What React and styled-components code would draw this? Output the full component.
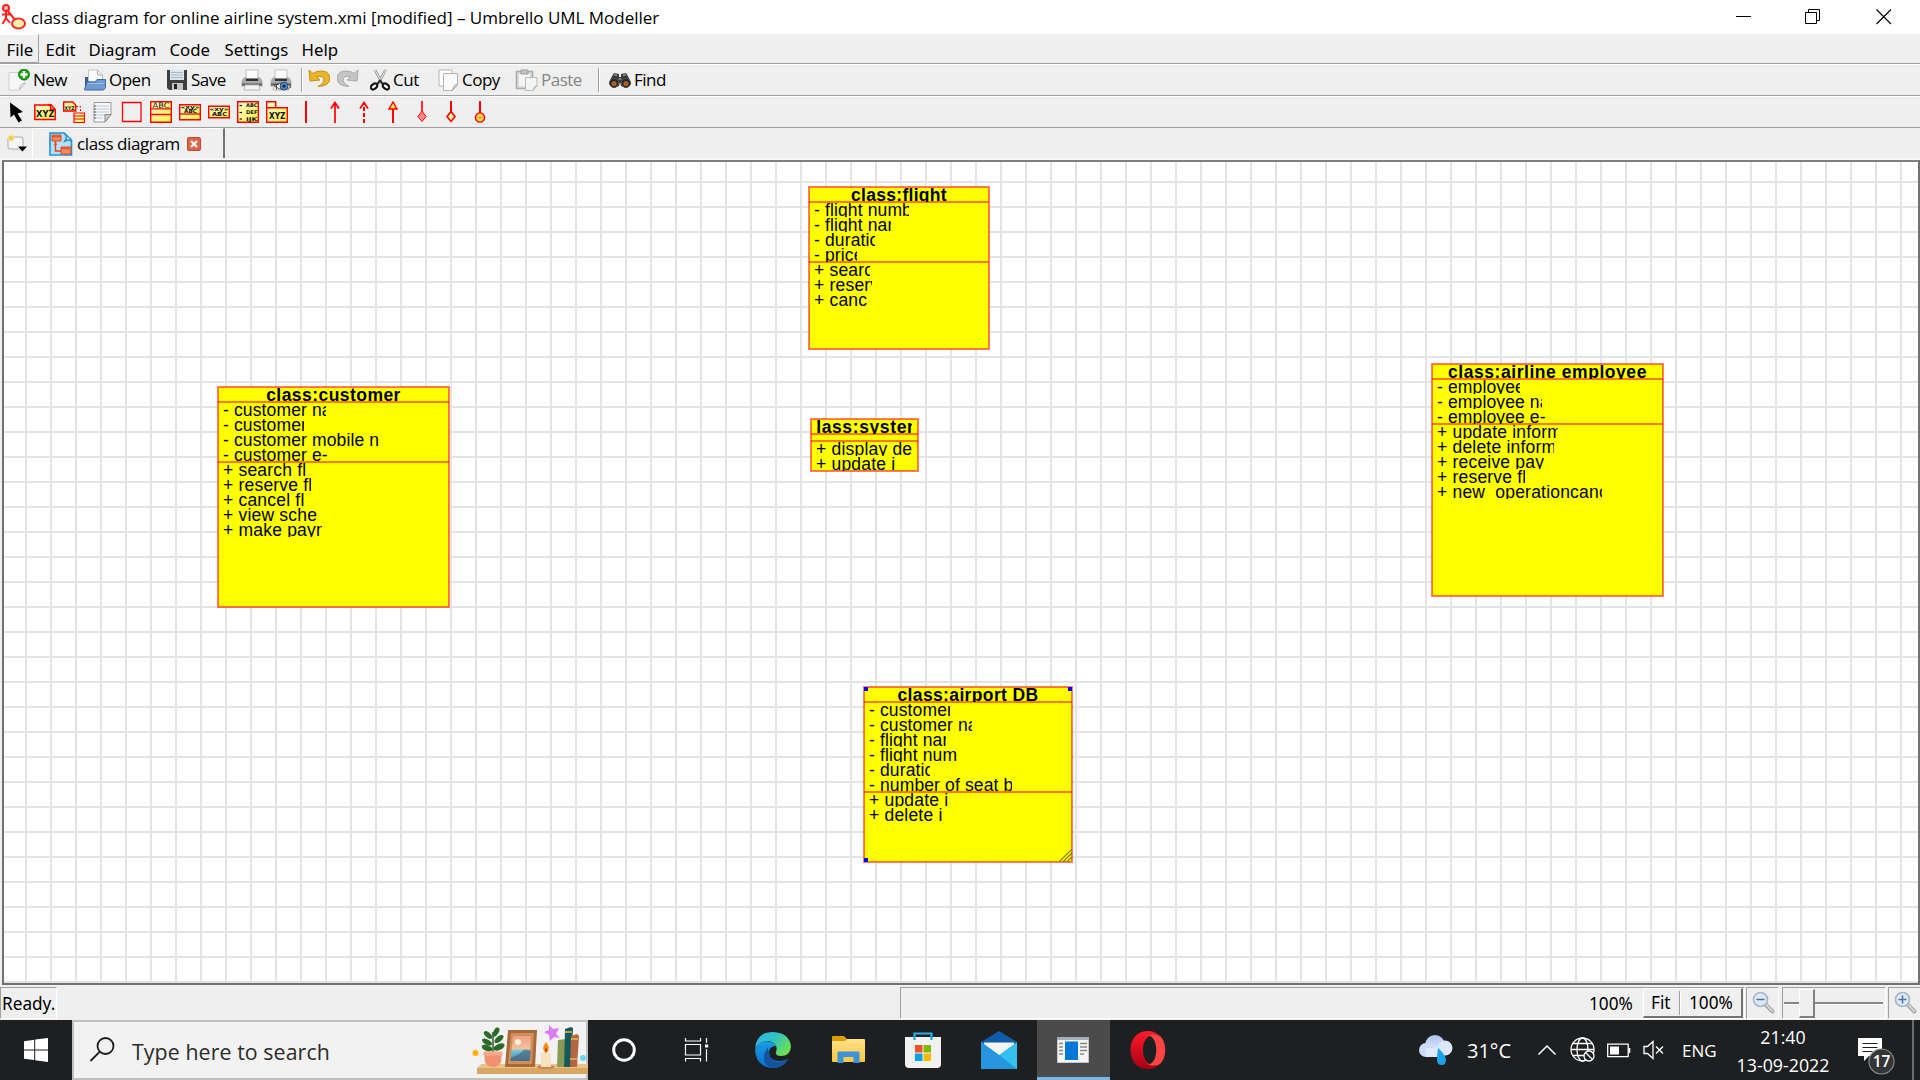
import React from "react";
import styled, { createGlobalStyle } from "styled-components";

const GlobalStyle = createGlobalStyle`
  *, *::before, *::after { box-sizing: border-box; }
  body { margin: 0; overflow: hidden; background: #efefef; }
  svg { display: block; flex: none; }
`;

const RED = "#ff0000";

const Screen = styled.div`
  width: 1920px;
  height: 1080px;
  display: flex;
  flex-direction: column;
  overflow: hidden;
  background: #efefef;
  color: #000;
  font-family: "Noto Sans", "Open Sans", sans-serif;
  font-size: 16.8px;
  white-space: nowrap;
`;

const TitleBar = styled.header`
  height: 34px;
  flex: none;
  display: flex;
  align-items: center;
  background: #fff;
  padding: 0 9px 0 1px;
`;

const WindowTitle = styled.div`
  flex: 1;
  margin-left: 5px;
  padding-top: 2px;
  font: 17px/24px "Open Sans", sans-serif;
  letter-spacing: ${(p) => p.$tracking}px;
`;

const WindowButtons = styled.div`
  display: flex;
  gap: 46px;
  padding-right: 15px;
`;

const MenuBar = styled.nav`
  height: 30px;
  flex: none;
  display: flex;
  border-bottom: 1px solid #a0a0a0;
`;

const MenuItem = styled.div`
  width: ${(p) => p.$width}px;
  height: 29px;
  padding: 0 0 0 6.5px;
  line-height: 29px;
  border-right: 1px solid ${(p) => (p.$active ? "#a0a0a0" : "transparent")};
  border-bottom: 1px solid ${(p) => (p.$active ? "#a0a0a0" : "transparent")};
  border-top: 1px solid ${(p) => (p.$active ? "#fff" : "transparent")};
`;

const ToolBar = styled.div`
  height: 32px;
  flex: none;
  display: flex;
  align-items: center;
  border-top: 1px solid #fff;
  border-bottom: 1px solid #a0a0a0;
  padding-left: ${(p) => p.$inset}px;
  gap: ${(p) => p.$gap || 0}px;
`;

const ToolButton = styled.div`
  width: ${(p) => p.$width}px;
  display: flex;
  align-items: center;
  gap: 3px;
  flex: none;
  color: ${(p) => (p.$disabled ? "#868686" : "#000")};
  font: 17px/24px "Open Sans", sans-serif;
  letter-spacing: -0.5px;
`;

const ZoomButton = styled.div`
  width: ${(p) => p.$width}px;
  flex: none;
`;

const Separator = styled.div`
  width: 2px;
  height: 24px;
  background: #a0a0a0;
  border-right: 1px solid #fff;
  margin-right: ${(p) => p.$after}px;
  flex: none;
`;

const TabBar = styled.div`
  height: 32px;
  flex: none;
  display: flex;
  align-items: stretch;
  border-bottom: 2px solid #f8f8f8;
`;

const NewTab = styled.div`
  width: 32px;
  padding: 6px 0 0 6px;
`;

const Tab = styled.div`
  width: 193px;
  display: flex;
  align-items: center;
  padding-left: 16px;
  border-left: 1px solid #fff;
  border-top: 1px solid #fff;
  border-right: 2px solid #727272;
`;

const TabName = styled.span`
  width: 114px;
  flex: none;
  padding-left: 4px;
  font: 17px/24px "Open Sans", sans-serif;
  letter-spacing: -0.4px;
`;

const Canvas = styled.main`
  position: relative;
  height: 825px;
  flex: none;
  margin-left: 2px;
  overflow: hidden;
  border: 2px solid #727272;
  border-top-color: #808080;
  background-color: #fff;
  background-image:
    linear-gradient(to right, #e4e4e4 2px, transparent 2px),
    linear-gradient(to bottom, #e4e4e4 2px, transparent 2px);
  background-size: 25px 25px;
  background-position: 21px 19px;
`;

const LINE = "rgba(255, 0, 0, 0.52)";

const ClassBox = styled.section`
  position: absolute;
  left: ${(p) => p.$x}px;
  top: ${(p) => p.$y}px;
  width: ${(p) => p.$w}px;
  height: ${(p) => p.$h}px;
  background: #ffff00;
  box-shadow: 0 0 0 1px ${LINE}, inset 0 0 0 1px ${LINE};
  font-family: "Liberation Sans", Arial, sans-serif;
  font-size: 17.5px;
`;

const ClassName = styled.div`
  height: 15px;
  padding: 0 6px;
  box-shadow: 0 1px 0 ${LINE}, inset 0 -1px 0 ${LINE};
`;

const ClassNameClip = styled.div`
  height: 15px;
  display: flex;
  justify-content: center;
  overflow: hidden;
  line-height: 16px;
  font-weight: 700;
  letter-spacing: ${(p) => p.$tracking}px;
`;

const Members = styled.div`
  padding-left: 5px;
  min-height: 7px;
  box-shadow: ${(p) => (p.$ruled ? `0 1px 0 ${LINE}, inset 0 -1px 0 ${LINE}` : "none")};
`;

const Member = styled.div`
  width: ${(p) => p.$w}px;
  height: 15px;
  overflow: hidden;
  line-height: 16px;
  letter-spacing: ${(p) => (p.$operation ? 0.2 : 0.13)}px;
  white-space: pre;
`;

const Handle = styled.i`
  position: absolute;
  width: 4px;
  height: 4px;
  background: #0000ff;
  ${(p) => p.$v}: 0;
  ${(p) => p.$h}: 0;
`;

const ResizeGrip = styled.svg`
  position: absolute;
  right: 0;
  bottom: 0;
`;

const StatusBar = styled.footer`
  height: 35px;
  flex: none;
  display: flex;
  align-items: flex-start;
  padding-top: 2px;
  font-size: 17.2px;
`;

const sunken = `
  border: 1px solid #a0a0a0;
  border-right-color: #fff;
  border-bottom-color: #fff;
`;

const StatusPanel = styled.div`
  ${sunken}
  width: ${(p) => p.$width}px;
  height: 32px;
  display: flex;
  align-items: center;
  justify-content: ${(p) => p.$align || "flex-start"};
  margin-right: ${(p) => p.$after || 0}px;
  padding-left: ${(p) => p.$pad || 0}px;
  flex: none;
`;

const ZoomValue = styled.span`
  width: 54px;
`;

const ZoomButtons = styled.div`
  width: 100px;
  height: 30px;
  display: flex;
  align-items: center;
  margin-right: 1px;
  border: 1px solid #fff;
  border-right: 2px solid #727272;
  border-bottom: 2px solid #727272;
  padding-left: 7px;
`;

const Slider = styled.div`
  width: 99px;
  height: 30px;
  display: flex;
  align-items: center;
`;

const Groove = styled.div`
  width: ${(p) => p.$width}px;
  height: 3px;
  background: #868686;
  border-bottom: 1px solid #fff;
`;

const Thumb = styled.div`
  width: 16px;
  height: 29px;
  background: #efefef;
  border: 1px solid #fff;
  border-right: 2px solid #808080;
  border-bottom: 2px solid #808080;
`;

const TaskBar = styled.div`
  height: 60px;
  flex: none;
  display: flex;
  background: #1d1f21;
  color: #fff;
  font-family: "Open Sans", sans-serif;
`;

const StartButton = styled.div`
  width: 72px;
  display: flex;
  align-items: center;
  padding-left: 24px;
`;

const SearchBox = styled.div`
  width: 516px;
  height: 60px;
  display: flex;
  align-items: center;
  flex: none;
  background: #f2f2f2;
  border: 2px solid #c0c0c0;
  padding-left: 15px;
  color: #2b2b2b;
  font-size: 21.3px;
`;

const SearchHint = styled.span`
  width: 357px;
  flex: none;
  padding: 3px 0 0 17px;
  letter-spacing: ${(p) => p.$tracking}px;
`;

const TaskButton = styled.div`
  width: ${(p) => p.$width || 75}px;
  height: 60px;
  display: flex;
  align-items: center;
  justify-content: center;
  flex: none;
  background: ${(p) => (p.$active ? "#4b4b4b" : "transparent")};
  border-bottom: 3px solid ${(p) => (p.$active ? "#76b9ed" : "transparent")};
  border-top: 3px solid transparent;
  padding-right: ${(p) => (p.$active ? 2 : 0)}px;
`;

const Tray = styled.div`
  margin-left: auto;
  width: 502px;
  display: flex;
  align-items: center;
`;

const TrayItem = styled.div`
  width: ${(p) => p.$width}px;
  flex: none;
  font-size: ${(p) => p.$size || 17}px;
`;

const Clock = styled.div`
  width: 98px;
  margin-right: 24px;
  padding-top: 1px;
  font-size: 17.8px;
  line-height: 28px;
  text-align: center;
`;

const NotificationSlot = styled.div`
  padding-top: 12px;
`;

const ShowDesktop = styled.div`
  width: 8px;
  height: 60px;
  border-left: 2px solid #6a6b6c;
  margin-left: auto;
`;

/* ---------- icons ---------- */

const AppLogo = () => (
  <svg width="25" height="26" viewBox="0 0 25 26" fill="none" stroke="#f22" strokeWidth="2">
    <circle cx="5" cy="4" r="3" fill="#fbb" />
    <path d="M5 7v7M1 10.500h9M5 14l-3.500 6M5 14l4 5M6 6l9 11" />
    <ellipse cx="17.500" cy="19.500" rx="6.500" ry="5" fill="#fdf3b0" />
  </svg>
);

const Minimize = () => (
  <svg width="24" height="24" viewBox="0 0 24 24"><path d="M4 11.500h15" stroke="#000" /></svg>
);
const Restore = () => (
  <svg width="24" height="24" viewBox="0 0 24 24" fill="none" stroke="#000">
    <path d="M3.500 7.500h11v11h-11zM6.500 7.500v-3h11v11h-3" />
  </svg>
);
const CloseWindow = () => (
  <svg width="24" height="24" viewBox="0 0 24 24"><path d="M4.500 4.500l14.500 14.500M19 4.500l-14.500 14.500" stroke="#000" strokeWidth="1.100" /></svg>
);

const Icon = ({ children, w = 22, h = 22 }) => (
  <svg width={w} height={h} viewBox={`0 0 ${w} ${h}`} fill="none">{children}</svg>
);

const NewIcon = () => (
  <Icon>
    <path d="M1 3.500h16v11l-6 6.500H1z" fill="#f7f7f7" stroke="#cfcfcf" />
    <path d="M17 14.500q-5-.500-5.500 6z" fill="#fff" stroke="#b5b5b5" />
    <circle cx="16" cy="5.500" r="5.500" fill="#22a01c" stroke="#14830f" />
    <path d="M16 2v7M12.500 5.500h7" stroke="#fff" strokeWidth="2.400" />
  </Icon>
);
const OpenIcon = () => (
  <Icon>
    <path d="M1 8h5v12H1z" fill="#315f99" />
    <path d="M4.500 12V1h9l5 5v8z" fill="#fafafa" stroke="#c4c4c4" />
    <path d="M13.500 1v5h5" stroke="#b0b0b0" />
    <path d="M.500 20.500L3 13h8l2-2.500h8.500v8l-2 2.500H.500z" fill="#6f9bd0" stroke="#3b6aa6" />
    <path d="M3.500 14.500h17" stroke="#9dbde3" />
  </Icon>
);
const SaveIcon = () => (
  <Icon>
    <path d="M1 1h20v20H3l-2-2z" fill="#3f3f42" />
    <path d="M4 1h14v10H4z" fill="#dce4ec" />
    <path d="M5 3.500h12M5 6h12M5 8.500h12" stroke="#a9b9c8" />
    <path d="M6 14h11v7H6z" fill="#c5c5c5" />
    <path d="M8 15h3v5H8z" fill="#222" />
  </Icon>
);
const PrinterBody = () => (
  <>
    <path d="M5 1h12v9H5z" fill="#fff" stroke="#c0c0c0" />
    <path d="M2 9.500l3-2v4h12v-4l3 2 1.500 3v5H.500v-5z" fill="#a9a9a9" />
    <path d="M5 9.500h12v2.500H5z" fill="#333" />
    <path d="M1 15.500h20" stroke="#5d5d5d" strokeWidth="2" />
    <path d="M4 16h14l1 5H3z" fill="#f4f4f4" stroke="#b5b5b5" />
  </>
);
const PrintIcon = () => <Icon><PrinterBody /></Icon>;
const PreviewIcon = () => (
  <Icon>
    <PrinterBody />
    <path d="M4 17q9-7 17 1q-8 5-15 0z" fill="#fff" stroke="#555" />
    <circle cx="14" cy="17" r="4" fill="#4b86bd" stroke="#27547f" />
    <circle cx="14" cy="17" r="1.500" fill="#10243a" />
    <path d="M4 15.500h5M6.500 15.500v5" stroke="#444" />
  </Icon>
);
const UndoIcon = ({ redo }) => (
  <Icon>
    <g transform={redo ? "translate(22 0) scale(-1 1)" : undefined}>
      <path
        d="M1 1l1 11 10-1-3.500-3.500q7.500-1 7.500 3.500 0 4-6 6.500 12-.500 12-8.500Q21 1.500 12.500 2 8 2 5 4.500z"
        fill={redo ? "#c4c4c4" : "#e9b52b"}
        stroke={redo ? "#a8a8a8" : "#c48f12"}
        strokeLinejoin="round"
      />
    </g>
  </Icon>
);
const CutIcon = () => (
  <Icon w={20}>
    <path d="M5 1l7.500 14M15.500 1L8 15" stroke="#8d8d8d" strokeWidth="2.600" />
    <path d="M5 1l7.500 14M15.500 1L8 15" stroke="#f2f2f2" strokeWidth="1" />
    <ellipse cx="4" cy="17.500" rx="3.600" ry="2.400" transform="rotate(-38 4 17.500)" stroke="#111" strokeWidth="2" />
    <ellipse cx="16" cy="17.500" rx="3.600" ry="2.400" transform="rotate(38 16 17.500)" stroke="#111" strokeWidth="2" />
    <path d="M7 15.500l3-4 3 4" stroke="#222" strokeWidth="1.800" />
  </Icon>
);
const CopyIcon = () => (
  <Icon w={21}>
    <path d="M1 1h13v16H1z" fill="#fff" stroke="#b4b4b4" />
    <path d="M5.500 4.500h14v11l-5 6h-9z" fill="#f9f9f9" stroke="#b4b4b4" />
    <path d="M19.500 15.500q-4-.500-5 6z" fill="#ddd" stroke="#aaa" />
  </Icon>
);
const PasteIcon = () => (
  <Icon w={23}>
    <path d="M1.500 2.500h16v17h-16z" fill="#dcdcdc" stroke="#adadad" strokeWidth="1.600" />
    <path d="M4 5h11v12H4z" fill="#f5f5f5" />
    <path d="M6 1h7v4H6z" fill="#c6c6c6" stroke="#9a9a9a" />
    <path d="M10.500 8.500h11.500v8l-4 5h-7.500z" fill="#f4f4f4" stroke="#bbb" />
    <path d="M22 16.500q-3 0-4 5z" fill="#ddd" stroke="#bbb" />
  </Icon>
);
const FindIcon = () => (
  <Icon>
    <path d="M5 4l5 1v3h2V5l5-1 3 5 2 6-5 4-5-2-1-4-1 4-5 2-5-4 2-6z" fill="#3a3a3a" />
    <circle cx="5" cy="14" r="4.500" fill="#222" stroke="#555" />
    <circle cx="17" cy="14" r="4.500" fill="#222" stroke="#555" />
    <circle cx="5" cy="14.500" r="2.600" fill="#a85f28" />
    <circle cx="17" cy="14.500" r="2.600" fill="#a85f28" />
    <path d="M5 5.500l3 1M14 6.500l3-1M9.500 10h3" stroke="#8f8f8f" strokeWidth="1.500" />
  </Icon>
);

const HiddenDefs = styled.svg`
  position: absolute;
`;

const Defs = () => (
  <HiddenDefs width="0" height="0">
    <defs>
      <linearGradient id="note" x1="0" y1="0" x2="1" y2="1">
        <stop offset="0" stopColor="#ffffd8" />
        <stop offset="1" stopColor="#ffee3a" />
      </linearGradient>
      <linearGradient id="edgeTop" x1="0" y1="0" x2="1" y2=".6">
        <stop offset="0" stopColor="#35b4f0" />
        <stop offset=".5" stopColor="#2fc3c4" />
        <stop offset="1" stopColor="#6be04e" />
      </linearGradient>
      <linearGradient id="edgeLow" x1="0" y1="0" x2="0" y2="1">
        <stop offset="0" stopColor="#1b9de2" />
        <stop offset="1" stopColor="#0a6fd0" />
      </linearGradient>
      <linearGradient id="folder" x1="0" y1="0" x2="0" y2="1">
        <stop offset="0" stopColor="#ffe08a" />
        <stop offset="1" stopColor="#fbc740" />
      </linearGradient>
      <linearGradient id="opera" x1="0" y1="0" x2="0" y2="1">
        <stop offset="0" stopColor="#ff1b2d" />
        <stop offset="1" stopColor="#a70014" />
      </linearGradient>
      <linearGradient id="cloud" x1="0" y1="0" x2="0" y2="1">
        <stop offset="0" stopColor="#a9c5f4" />
        <stop offset="1" stopColor="#eef3fd" />
      </linearGradient>
      <linearGradient id="sunset" x1="0" y1="0" x2="0" y2="1">
        <stop offset="0" stopColor="#f59c84" />
        <stop offset=".5" stopColor="#f3c29e" />
        <stop offset=".6" stopColor="#6ec6dc" />
        <stop offset="1" stopColor="#4a7fa8" />
      </linearGradient>
    </defs>
  </HiddenDefs>
);

const Glyphs = ({ x, y, size, length, children }) => (
  <text x={x} y={y} fontFamily="DejaVu Sans, sans-serif" fontWeight="700" fontSize={size} textLength={length} lengthAdjust="spacingAndGlyphs" fill="#111">
    {children}
  </text>
);

const Pointer = () => (
  <Icon><path d="M5 1.500l.500 15 3.500-3 4.500 8 3.500-2-4.500-7 5.500-1.500z" fill="#000" /></Icon>
);
const ClassTool = () => (
  <Icon>
    <path d="M.800 18.500V4h13l3-.500 4.500 5v10z" fill="url(#note)" stroke={RED} strokeWidth="1.500" />
    <path d="M14 3.500q4 1 2.500 5h5" stroke={RED} strokeWidth="1.500" />
    <Glyphs x="2" y="16" size="8.500" length="18.500">XYZ</Glyphs>
  </Icon>
);
const TemplateTool = () => (
  <Icon>
    <path d="M.700 10V1h9l3 3v6z" fill="url(#note)" stroke={RED} strokeWidth="1.400" />
    <Glyphs x="1.500" y="8.500" size="5" length="10">XYZ</Glyphs>
    <path d="M13 5.500h4.500v6" stroke={RED} strokeDasharray="2 1.500" />
    <path d="M11 12h10.500v9.500H11zM11 15h10.500M11 18h10.500" fill="url(#note)" stroke={RED} strokeWidth="1.200" />
  </Icon>
);
const NoteTool = () => (
  <Icon>
    <path d="M2 1.500h17v12l-6 7.500H2z" fill="#f6f8fb" stroke="#9a9a9a" />
    <path d="M4 5h13M4 8h13M4 11h13M4 14h9M4 17h7" stroke="#b9c6d4" />
    <path d="M3 5h.1M3 8h.1M3 11h.1M3 14h.1M3 17h.1" stroke="#444" strokeWidth="1.500" strokeLinecap="round" />
    <path d="M19 13.500h-6V21z" fill="#ccc" stroke="#8a8a8a" />
  </Icon>
);
const BoxTool = () => <Icon><path d="M1.500 1.500h18.500v19H1.500z" stroke={RED} strokeWidth="1.300" /></Icon>;
const RowsTool = () => (
  <Icon>
    <path d="M.700 .700h20.600v20.600H.700z" fill="url(#note)" stroke={RED} strokeWidth="1.400" />
    <path d="M1 7.800h20M1 13.500h20" stroke={RED} strokeWidth="1.300" />
    <text x="2.500" y="7" fontFamily="DejaVu Sans, sans-serif" fontSize="7.500" textLength="17" lengthAdjust="spacingAndGlyphs" fill="#111">ABC</text>
  </Icon>
);
const InterfaceTool = () => (
  <Icon>
    <path d="M.700 3.700h20.600v15H.700z" fill="url(#note)" stroke={RED} strokeWidth="1.400" />
    <path d="M1 13h20" stroke={RED} strokeWidth="1.300" />
    <Glyphs x="1.500" y="7.500" size="5.500" length="19">«xy»</Glyphs>
    <Glyphs x="5" y="12" size="5.500" length="13">ABC</Glyphs>
  </Icon>
);
const DatatypeTool = () => (
  <Icon>
    <path d="M.700 5.200h20.600v11.600H.700z" fill="url(#note)" stroke={RED} strokeWidth="1.400" />
    <Glyphs x="1.500" y="9.800" size="5.500" length="19">«xy»</Glyphs>
    <Glyphs x="4" y="15.200" size="5.500" length="15">ABC</Glyphs>
  </Icon>
);
const EnumRow = ({ y, children }) => (
  <>
    <path d={`M2.500 ${y - 1.500}h2.500`} stroke="#111" strokeWidth="1.200" />
    <Glyphs x="9" y={y} size="5" length="11.500">{children}</Glyphs>
  </>
);
const EnumTool = () => (
  <Icon>
    <path d="M.700 .700h20.600v20.600H.700z" fill="url(#note)" stroke={RED} strokeWidth="1.400" />
    <EnumRow y={6}>ABC</EnumRow>
    <EnumRow y={13}>DEF</EnumRow>
    <EnumRow y={19.5}>IJK</EnumRow>
  </Icon>
);
const PackageTool = () => (
  <Icon>
    <path d="M.700 21.300V.700h9v6h11.600v14.600zM.700 6.700h9" fill="url(#note)" stroke={RED} strokeWidth="1.400" />
    <Glyphs x="3" y="18" size="9" length="16.500">XYZ</Glyphs>
  </Icon>
);
const Relation = ({ children }) => <Icon><g stroke={RED} strokeWidth="2">{children}</g></Icon>;

const NewTabIcon = () => (
  <svg width="22" height="20" viewBox="0 0 22 20" fill="none">
    <rect x="2" y="3" width="15" height="12" rx="2" fill="#f5f5f5" stroke="#a9a9a9" />
    <circle cx="5" cy="4" r="2.800" fill="#f4cc3c" stroke="#f7e59c" />
    <path d="M12 12.500h9l-4.500 5z" fill="#000" />
  </svg>
);
const TabIcon = () => (
  <Icon w={24} h={24}>
    <path d="M1 1h14l7.500 7v15H1z" fill="#b4e0fa" stroke="#1f8fdc" strokeWidth="1.600" />
    <path d="M14.500 1q5 2 1.500 8 4-2 6.500 0" fill="#eaf7ff" stroke="#1f8fdc" strokeWidth="1.500" />
    <path d="M3 3h9v6H3zM12 15h10v7H12z" fill="#f08a62" stroke="#d94c1f" />
    <path d="M3 4.500h9M12 16.500h10" stroke="#e0562a" strokeWidth="1.600" />
    <path d="M6.500 9v10H12" stroke="#d8431c" strokeWidth="1.400" />
    <path d="M4.500 13l2-3 2 3z" fill="#e0562a" />
  </Icon>
);
const TabClose = () => (
  <Icon w={14} h={14}>
    <rect x=".500" y=".500" width="13" height="13" rx="1.500" fill="#dc6447" stroke="#c5482c" />
    <path d="M4 4l6 6M10 4l-6 6" stroke="#fff" strokeWidth="2.200" />
  </Icon>
);
const Magnifier = ({ plus }) => (
  <Icon w={24} h={24}>
    <path d="M13 13l7.500 7.500" stroke="#a5a5a5" strokeWidth="4" strokeLinecap="round" />
    <path d="M13.500 13l7 7.500" stroke="#dedede" strokeWidth="1.500" strokeLinecap="round" />
    <circle cx="8.500" cy="8.500" r="7" fill="#dce9f8" stroke="#a9b6c6" strokeWidth="1.700" />
    <path d={plus ? "M4.500 8.500h8M8.500 4.500v8" : "M4.500 8.500h8"} stroke="#4a72a8" strokeWidth="1.500" />
  </Icon>
);

const WindowsLogo = () => (
  <svg width="24" height="24" viewBox="0 0 24 24" fill="#fff">
    <path d="M0 3.200L10.200 1.800v9.600H0zM11.200 1.600L24 0v11.400H11.200zM0 12.500h10.200v9.500L0 20.700zM11.200 12.500H24V24l-12.800-1.700z" />
  </svg>
);
const SearchGlass = () => (
  <svg width="26" height="26" viewBox="0 0 26 26" fill="none" stroke="#1c1c1c" strokeWidth="1.800">
    <circle cx="16.500" cy="9" r="8" /><path d="M10.800 14.700L1.500 24" />
  </svg>
);
const Shelf = () => (
  <svg width="116" height="56" viewBox="0 0 116 56">
    <circle cx="3.500" cy="31" r="3" fill="#ffb100" />
    <path d="M5 46l4-4h107v4z" fill="#eac58a" /><path d="M5 46h111v6H5z" fill="#d9a765" />
    <path d="M21 32V10" stroke="#2f5f27" strokeWidth="1.500" />
    <g fill="#2c6a2a">
      <ellipse cx="24" cy="10" rx="5" ry="2.600" transform="rotate(-60 24 10)" />
      <ellipse cx="16" cy="13" rx="5" ry="2.500" transform="rotate(40 16 13)" />
      <ellipse cx="15" cy="20" rx="5.500" ry="2.700" transform="rotate(30 15 20)" />
      <ellipse cx="27" cy="17" rx="5.500" ry="2.700" transform="rotate(-40 27 17)" />
      <ellipse cx="15" cy="26" rx="5.500" ry="3" transform="rotate(20 15 26)" />
      <ellipse cx="27" cy="25" rx="6" ry="3" transform="rotate(-25 27 25)" />
    </g>
    <path d="M12 30h18l-1 10q-2 5-8 5t-8-5z" fill="#f2936f" /><path d="M11.500 29.500h19v4h-19z" fill="#f7a989" />
    <path d="M36 8h29l-2 37H33z" fill="#a8683a" /><path d="M39 11h23l-2 31H36z" fill="#cf8f58" />
    <path d="M41 14h18l-1.500 25H38.500z" fill="url(#sunset)" />
    <circle cx="46" cy="20" r="3" fill="#fff2d6" /><path d="M38.700 36q10-4 13-8 4-1 7 1l-1 10h-19z" fill="#49657f" opacity=".7" />
    <path d="M78 4l4 4 6-1-3 6 4 4-6-1-4 4-1-6-5-3 5-2z" fill="#d97cf5" transform="translate(-1 -1)" />
    <ellipse cx="74" cy="45" rx="9" ry="2" fill="#c98450" />
    <path d="M69 31h10v14H69z" fill="#f6e2bd" /><path d="M74 20q6 7 0 11-6-4 0-11z" fill="#ff8c1a" /><path d="M74 25q2 3 0 6-2-3 0-6z" fill="#d13a08" />
    <path d="M86 18l8-1-2 28h-7z" fill="#8a9a52" /><path d="M93 7l6-2 2 1-2 39h-7z" fill="#155a5a" />
    <path d="M99 14l6-2 2 2-2 31h-7z" fill="#b46642" />
    <path d="M93 10h7M99 17h7M98 37h8" stroke="#e0b95a" strokeWidth="1.500" />
    <circle cx="111" cy="36" r="3" fill="#69d8ee" />
  </svg>
);
const Cortana = () => (
  <Icon w={26} h={26}><circle cx="13" cy="13" r="10.300" stroke="#fff" strokeWidth="2.900" /></Icon>
);
const TaskView = () => (
  <Icon w={26} h={26}>
    <path d="M1.500 1v3h15V1M1.500 24.500v-3h15v3M1.500 7.500h15v10.500h-15zM22.500 1v5M22.500 12v12.500" stroke="#fff" strokeWidth="1.200" />
    <path d="M21 7.500h3.200v3H21z" fill="#fff" />
  </Icon>
);
const Edge = () => (
  <Icon w={36} h={36}>
    <path d="M0 16Q2 0 18 0q17 1 18 15-1 9-10 9-6 0-5-4 3-8-7-11Q6 8 0 16z" fill="url(#edgeTop)" />
    <path d="M0 18Q3 9 11 9q9 1 10 5-7 0-7 7 1 8 10 8 5 0 9-2-5 9-15 9Q1 35 0 18z" fill="url(#edgeLow)" />
    <path d="M14 20q0 9 9 10 5 0 10-3-5 9-15 9-8-1-9-9-1-6 5-13-2 2 0 6z" fill="#14539f" />
  </Icon>
);
const Explorer = () => (
  <Icon w={33} h={28}>
    <path d="M0 1q0-1 1-1h11l3 3-2 3H0z" fill="#e09c06" />
    <path d="M0 5h13l2-2h17q1 0 1 1v21q0 1-1 1H1q-1 0-1-1z" fill="url(#folder)" />
    <path d="M5.500 27V17q0-1.500 1.500-1.500h19q1.500 0 1.500 1.500v10h-6v-6h-10v6z" fill="#3c93dc" />
  </Icon>
);
const Store = () => (
  <Icon w={36} h={36}>
    <path d="M9.500 7V1.500h17V7" stroke="#27b1ee" strokeWidth="2.200" />
    <path d="M0 5h36v27q0 4-4 4H4q-4 0-4-4z" fill="#f1f1f1" />
    <path d="M9.500 4v4M26.500 4v4" stroke="#1596d4" strokeWidth="2" />
    <path d="M10 13h7.500v7.500H10z" fill="#f25022" /><path d="M18.500 13H26v7.500h-7.500z" fill="#7fba00" />
    <path d="M10 21.500h7.500V29H10z" fill="#00a4ef" /><path d="M18.500 21.500H26V29h-7.500z" fill="#ffb900" />
  </Icon>
);
const Mail = () => (
  <Icon w={36} h={38}>
    <path d="M0 11L18 0l18 11v8H0z" fill="#0f5cab" />
    <path d="M3 11.500h30V20L18 28 3 20z" fill="#f5f5f5" />
    <path d="M0 11l18 13L36 11v27H0z" fill="#31c2f0" />
    <path d="M0 11l18 13 18 14H0z" fill="#2495de" />
  </Icon>
);
const AppWindow = () => (
  <Icon w={32} h={26}>
    <path d="M0 0h32v26H0z" fill="#f5f5f5" stroke="#999" /><path d="M0 0h32v3H0z" fill="#a8adb3" />
    <path d="M8 4.500h13v18.500H8z" fill="#0078d7" />
    <path d="M2 6.500h4M2 10h4M2 13.500h4M2 17h4M23 6.500h7M23 10h7M23 13.500h7M23 17h4" stroke="#888" strokeWidth="1.300" />
  </Icon>
);
const Opera = () => (
  <Icon w={36} h={38}>
    <path fillRule="evenodd" d="M18 0C6 0 .500 9 .500 19S6 38 18 38c5 0 9-2 12-5-9 4-17-2-17-14S21 1 30 5C27 2 23 0 18 0z" fill="url(#opera)" />
    <path d="M13.500 10C16 4 23 1.500 30 5c7 6 7 22 0 28-7 3.500-14 1-16.500-5 1.500 3.500 4 5 6 5 9-2 9-26 0-28-2 0-4.500 1.500-6 5z" fill="#fb4444" />
  </Icon>
);
const Weather = () => (
  <Icon w={36} h={34}>
    <circle cx="17" cy="12" r="10" fill="url(#cloud)" /><circle cx="8" cy="17" r="7" fill="#c9dafa" />
    <circle cx="27" cy="15" r="7.500" fill="#dfe8fb" /><path d="M8 15h19v9H8z" fill="#dfe9fc" />
    <path d="M20 15q8 7 8 12t-4.500 5-4.500-5q0-4 1-12z" fill="#1ca0e6" />
  </Icon>
);
const Caret = () => <Icon w={20} h={12}><path d="M1.500 10.500L10 2l8.500 8.500" stroke="#fff" strokeWidth="1.500" /></Icon>;
const Globe = () => (
  <Icon w={26} h={26}>
    <g stroke="#fff" strokeWidth="1.300">
      <circle cx="12.500" cy="12.500" r="11.500" /><ellipse cx="12.500" cy="12.500" rx="5.500" ry="11.500" />
      <path d="M1 12.500h23M3 6.500h19M3 18.500h12" />
      <circle cx="19" cy="19" r="5" fill="#1d1f21" /><path d="M15.500 15.500l7 7" />
    </g>
  </Icon>
);
const Battery = () => (
  <Icon w={24} h={15}>
    <path d="M.700 1.200h20.500v12.500H.700z" stroke="#fff" strokeWidth="1.300" /><path d="M22.500 5v5" stroke="#fff" strokeWidth="1.600" />
    <path d="M3 3.500h9v8H3z" fill="#fff" />
  </Icon>
);
const Muted = () => (
  <Icon w={22} h={20}>
    <path d="M1 6.500h3.500L10 1.500v17l-5.500-5H1z" stroke="#fff" strokeWidth="1.300" /><path d="M13 6.500l7 7M20 6.500l-7 7" stroke="#fff" strokeWidth="1.300" />
  </Icon>
);
const Notifications = () => (
  <svg width="40" height="40" viewBox="0 0 40 40">
    <path d="M2 2h24v18H13l-5 5v-5H2z" fill="#fff" /><path d="M6.500 7.500h15M6.500 11.500h15M6.500 15.500h10" stroke="#1d1f21" strokeWidth="1.200" />
    <circle cx="25.500" cy="25.500" r="12.500" fill="#333537" stroke="#8a8b8c" strokeWidth="1.200" />
    <text x="25.500" y="31" textAnchor="middle" fontFamily="Open Sans, sans-serif" fontWeight="600" fontSize="15.500" fill="#fff">17</text>
  </svg>
);

/* ---------- data ---------- */

const menus = [
  ["File", 39, true], ["Edit", 43], ["Diagram", 81], ["Code", 55], ["Settings", 77], ["Help", 50],
];

const classes = [
  {
    name: "class:flight", x: 809, y: 187, w: 180, h: 162, tracking: 0.3,
    attributes: [["- flight numb", 95], ["- flight nam", 77], ["- duratio", 61], ["- price", 43]],
    operations: [["+ searc", 56], ["+ reserv", 58], ["+ canc", 53]],
  },
  {
    name: "class:system", x: 811, y: 419, w: 107, h: 52, tracking: 0.62,
    attributes: [],
    operations: [["+ display de", 97], ["+ update i", 80]],
  },
  {
    name: "class:customer", x: 218, y: 387, w: 231, h: 220, tracking: 0.45,
    attributes: [["- customer na", 103], ["- customer", 81], ["- customer mobile n", 156], ["- customer e-", 105]],
    operations: [["+ search fl", 84], ["+ reserve fl", 88], ["+ cancel fl", 82], ["+ view sche", 96], ["+ make paym", 99]],
  },
  {
    name: "class:airline employee", x: 1432, y: 364, w: 231, h: 232, tracking: 0.55,
    attributes: [["- employee", 83], ["- employee na", 105], ["- employee e-", 109]],
    operations: [["+ update inform", 121], ["+ delete inform", 117], ["+ receive pay", 107], ["+ reserve fl", 88], ["+ new  operationcanc", 165]],
  },
  {
    name: "class:airport DB", x: 864, y: 687, w: 208, h: 175, tracking: 0.36, selected: true,
    attributes: [["- customer", 81], ["- customer na", 103], ["- flight nam", 77], ["- flight num", 88], ["- duratio", 61], ["- number of seat b", 143]],
    operations: [["+ update i", 80], ["+ delete i", 74]],
  },
];

const CANVAS_LEFT = 4;
const CANVAS_TOP = 162;

const DiagramClass = ({ item }) => (
  <ClassBox $x={item.x - CANVAS_LEFT} $y={item.y - CANVAS_TOP} $w={item.w} $h={item.h}>
    <ClassName><ClassNameClip $tracking={item.tracking}><span>{item.name}</span></ClassNameClip></ClassName>
    <Members $ruled>
      {item.attributes.map(([text, w], i) => <Member key={i} $w={w}>{text}</Member>)}
    </Members>
    <Members>
      {item.operations.map(([text, w], i) => <Member key={i} $w={w} $operation>{text}</Member>)}
    </Members>
    {item.selected && (
      <>
        <Handle $v="top" $h="left" /><Handle $v="top" $h="right" /><Handle $v="bottom" $h="left" />
        <ResizeGrip width="13" height="13" viewBox="0 0 13 13" stroke="#707000" strokeWidth="1.100">
          <path d="M0 13L13 0M4 13l9-9M8 13l5-5" />
        </ResizeGrip>
      </>
    )}
  </ClassBox>
);

export default function App() {
  return (
    <Screen>
      <GlobalStyle />
      <Defs />
      <TitleBar>
        <AppLogo />
        <WindowTitle $tracking={-0.02}>class diagram for online airline system.xmi [modified] – Umbrello UML Modeller</WindowTitle>
        <WindowButtons><Minimize /><Restore /><CloseWindow /></WindowButtons>
      </TitleBar>
      <MenuBar>
        {menus.map(([label, width, active]) => (
          <MenuItem key={label} $width={width} $active={active}>{label}</MenuItem>
        ))}
      </MenuBar>
      <ToolBar $inset={8}>
        <ToolButton $width={76}><NewIcon />New</ToolButton>
        <ToolButton $width={82}><OpenIcon />Open</ToolButton>
        <ToolButton $width={75}><SaveIcon />Save</ToolButton>
        <ToolButton $width={29}><PrintIcon /></ToolButton>
        <ToolButton $width={31}><PreviewIcon /></ToolButton>
        <Separator $after={5} />
        <ToolButton $width={29}><UndoIcon /></ToolButton>
        <ToolButton $width={33}><UndoIcon redo /></ToolButton>
        <ToolButton $width={68}><CutIcon />Cut</ToolButton>
        <ToolButton $width={77}><CopyIcon />Copy</ToolButton>
        <ToolButton $width={83} $disabled><PasteIcon />Paste</ToolButton>
        <Separator $after={9} />
        <ToolButton $width={70}><FindIcon />Find</ToolButton>
      </ToolBar>
      <ToolBar $inset={5} $gap={7}>
        <Pointer /><ClassTool /><TemplateTool /><NoteTool /><BoxTool /><RowsTool />
        <InterfaceTool /><DatatypeTool /><EnumTool /><PackageTool />
        <Relation><path d="M11 0v22" /></Relation>
        <Relation><path d="M11 22V2M7 7.500l4-6 4 6" strokeWidth="1.700" /></Relation>
        <Relation><path d="M11 22V2" strokeDasharray="4 2" /><path d="M7 7.500l4-6 4 6" strokeWidth="1.700" /></Relation>
        <Relation><path d="M11 22V7" /><path d="M7 8l4-7 4 7z" fill="#ffe34d" strokeWidth="1.400" /></Relation>
        <Relation><path d="M11 0v11" strokeWidth="1.600" /><path d="M11 10l4 5.500-4 5-4-5z" fill="#ff8a8a" strokeWidth="1" /></Relation>
        <Relation><path d="M11 0v11" /><path d="M11 10.500l4 5-4 5-4-5z" fill="#fff3a0" strokeWidth="1.600" /></Relation>
        <Relation><path d="M11 0v12" /><circle cx="11" cy="16.500" r="4.500" fill="#ffe34d" strokeWidth="1.500" /><path d="M11 12v9M7 16.500h8" stroke="#ff9a3c" strokeWidth="1" /></Relation>
      </ToolBar>
      <TabBar>
        <NewTab><NewTabIcon /></NewTab>
        <Tab><TabIcon /><TabName>class diagram</TabName><TabClose /></Tab>
      </TabBar>
      <Canvas>
        {classes.map((item) => <DiagramClass key={item.name} item={item} />)}
      </Canvas>
      <StatusBar>
        <StatusPanel $width={57} $after={843} $pad={1}>Ready.</StatusPanel>
        <StatusPanel $width={845} $align="flex-end" $after={1}>
          <ZoomValue>100%</ZoomValue>
          <ZoomButtons>
            <ZoomButton $width={28}>Fit</ZoomButton>
            <Separator $after={8} />
            <ZoomButton $width={46}>100%</ZoomButton>
          </ZoomButtons>
        </StatusPanel>
        <StatusPanel $width={33} $after={3} $pad={5}><Magnifier /></StatusPanel>
        <StatusPanel $width={104} $after={2} $pad={1}>
          <Slider><Groove $width={15} /><Thumb /><Groove $width={68} /></Slider>
        </StatusPanel>
        <StatusPanel $width={34} $pad={5}><Magnifier plus /></StatusPanel>
      </StatusBar>
      <TaskBar>
        <StartButton><WindowsLogo /></StartButton>
        <SearchBox><SearchGlass /><SearchHint $tracking={0.1}>Type here to search</SearchHint><Shelf /></SearchBox>
        <TaskButton $width={71}><Cortana /></TaskButton>
        <TaskButton $width={76}><TaskView /></TaskButton>
        <TaskButton $width={76}><Edge /></TaskButton>
        <TaskButton $width={75}><Explorer /></TaskButton>
        <TaskButton $width={74}><Store /></TaskButton>
        <TaskButton $width={77}><Mail /></TaskButton>
        <TaskButton $width={73} $active><AppWindow /></TaskButton>
        <TaskButton $width={75}><Opera /></TaskButton>
        <Tray>
          <TrayItem $width={49}><Weather /></TrayItem>
          <TrayItem $width={70} $size={20}>31°C</TrayItem>
          <TrayItem $width={33}><Caret /></TrayItem>
          <TrayItem $width={37}><Globe /></TrayItem>
          <TrayItem $width={36}><Battery /></TrayItem>
          <TrayItem $width={39}><Muted /></TrayItem>
          <TrayItem $width={52} $size={17}>ENG</TrayItem>
          <Clock>21:40<br />13-09-2022</Clock>
          <NotificationSlot><Notifications /></NotificationSlot>
          <ShowDesktop />
        </Tray>
      </TaskBar>
    </Screen>
  );
}
